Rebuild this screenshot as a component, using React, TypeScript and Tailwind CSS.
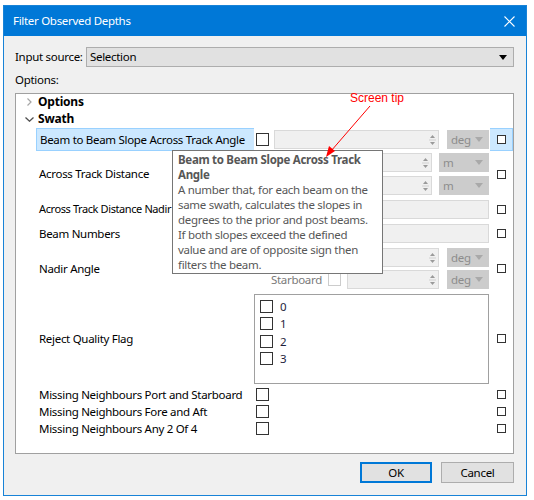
import React from "react";

const FONT = "font-['Noto_Sans','Open_Sans',sans-serif]";

function SmallBox() {
  return <div className="w-[9px] h-[9px] border border-[#333333] bg-white" />;
}

function Check({ disabled }: { disabled?: boolean }) {
  return (
    <div
      className={`w-[13px] h-[13px] border bg-white shrink-0 ${
        disabled ? "border-[#cccccc]" : "border-[#333333]"
      }`}
    />
  );
}

function SpinArrows() {
  return (
    <svg width="7" height="14" viewBox="0 0 7 14" className="shrink-0">
      <path d="M3.5 2 L6 5 L1 5 Z" fill="#9a9a9a" />
      <line x1="0" y1="7" x2="7" y2="7" stroke="#d0d0d0" strokeWidth="1" />
      <path d="M1 9 L6 9 L3.5 12 Z" fill="#9a9a9a" />
    </svg>
  );
}

function SpinField({ className }: { className: string }) {
  return (
    <div
      className={`h-[19px] border border-[#d9d9d9] bg-[#f0f0f0] flex items-center justify-end pr-[2px] ${className}`}
    >
      <SpinArrows />
    </div>
  );
}

function TextField({ className }: { className: string }) {
  return <div className={`h-[19px] border border-[#d9d9d9] bg-[#f0f0f0] ${className}`} />;
}

function Unit({ label, className }: { label: string; className: string }) {
  return (
    <div
      className={`h-[19px] bg-[#cccccc] flex items-center justify-between pl-[4px] pr-[6px] text-[#8c8c8c] ${className}`}
    >
      <span>{label}</span>
      <svg width="8" height="5" viewBox="0 0 8 5">
        <path d="M0 0 L8 0 L4 5 Z" fill="#a9a9a9" />
      </svg>
    </div>
  );
}

function Row({
  label,
  height,
  children,
  highlight,
  labelClass,
}: {
  label: string;
  height: string;
  children?: React.ReactNode;
  highlight?: boolean;
  labelClass?: string;
}) {
  return (
    <div className={`flex ${height}`}>
      <div className="w-[20px] shrink-0" />
      <div
        className={`w-[218px] shrink-0 flex items-center pl-[3px] whitespace-nowrap overflow-hidden ${
          highlight ? "bg-[#cce8ff] border border-r-0 border-[#99d1ff]" : ""
        } ${labelClass ?? ""}`}
      >
        {label}
      </div>
      <div className="w-[236px] shrink-0 flex flex-col justify-center">{children}</div>
      <div
        className={`flex-1 flex items-center justify-center ${
          highlight ? "bg-[#cce8ff] border border-l-0 border-[#99d1ff]" : ""
        }`}
      >
        <SmallBox />
      </div>
    </div>
  );
}

export default function App() {
  return (
    <div
      className={`relative w-[534px] h-[500px] bg-white text-[#000000] text-[11.5px] tracking-[-0.3px] ${FONT}`}
    >
      {/* Window */}
      <div className="absolute left-[3px] top-[5px] w-[524px] h-[491px] border border-[#1883d7] bg-[#f0f0f0] flex flex-col">
        {/* Title bar */}
        <div className="h-[30px] bg-[#0078d7] flex items-center justify-between pl-[9px] pr-[11px] shrink-0">
          <span className="text-white text-[11.5px]">Filter Observed Depths</span>
          <svg width="11" height="11" viewBox="0 0 11 11">
            <path d="M0.5 0.5 L10.5 10.5 M10.5 0.5 L0.5 10.5" stroke="#ffffff" strokeWidth="1.1" />
          </svg>
        </div>

        {/* Body */}
        <div className="flex flex-col pl-[11px] pr-[12px]">
          <div className="flex items-center mt-[11px] h-[20px]">
            <span className="w-[71px] whitespace-nowrap">Input source:</span>
            <div className="flex-1 h-[20px] bg-[#e1e1e1] border border-[#adadad] flex items-center justify-between pl-[3px] pr-[6px]">
              <span>Selection</span>
              <svg width="8" height="5" viewBox="0 0 8 5">
                <path d="M0 0 L8 0 L4 5 Z" fill="#000000" />
              </svg>
            </div>
          </div>

          <div className="mt-[5px] h-[16px] flex items-center">Options:</div>

          {/* Tree */}
          <div className="mt-[5px] h-[361px] bg-white border border-[#a0a0a0] flex flex-col">
            <div className="h-[16px] flex items-center">
              <div className="w-[22px] flex justify-end pr-[6px]">
                <svg width="5" height="8" viewBox="0 0 5 8">
                  <path d="M0.5 0.5 L4 4 L0.5 7.5" stroke="#a6a6a6" fill="none" strokeWidth="1.2" />
                </svg>
              </div>
              <span className="font-bold text-[12px] tracking-[-0.2px]">Options</span>
            </div>
            <div className="h-[18px] flex items-center">
              <div className="w-[22px] flex justify-end pr-[4px]">
                <svg width="9" height="5" viewBox="0 0 9 5">
                  <path d="M0.5 0.5 L4.5 4.2 L8.5 0.5" stroke="#505050" fill="none" strokeWidth="1.3" />
                </svg>
              </div>
              <span className="font-bold text-[12px] tracking-[-0.2px]">Swath</span>
            </div>

            <Row label="Beam to Beam Slope Across Track Angle" height="h-[23px]" highlight>
              <div className="flex items-center pl-[2px]">
                <Check />
                <SpinField className="w-[165px] ml-[5px]" />
                <Unit label="deg" className="w-[42px] ml-[8px]" />
              </div>
            </Row>

            <Row label="Across Track Distance" height="h-[46px]">
              <div className="flex flex-col gap-[4px]">
                <div className="flex items-center pl-[76px]">
                  <SpinField className="w-[102px]" />
                  <Unit label="m" className="w-[50px] ml-[7px]" />
                </div>
                <div className="flex items-center pl-[76px]">
                  <SpinField className="w-[102px]" />
                  <Unit label="m" className="w-[50px] ml-[7px]" />
                </div>
              </div>
            </Row>

            <Row
              label="Across Track Distance Nadir"
              height="h-[24px]"
              labelClass="text-[11px] tracking-[-0.4px]"
            >
              <div className="flex items-center pl-[46px]">
                <TextField className="w-[189px]" />
              </div>
            </Row>

            <Row label="Beam Numbers" height="h-[25px]">
              <div className="flex items-center pl-[46px]">
                <TextField className="w-[189px]" />
              </div>
            </Row>

            <Row label="Nadir Angle" height="h-[45px]">
              <div className="flex flex-col gap-[3px]">
                <div className="flex items-center justify-end pr-[1px]">
                  <Check disabled />
                  <SpinField className="w-[92px] ml-[6px]" />
                  <Unit label="deg" className="w-[42px] ml-[8px]" />
                </div>
                <div className="flex items-center justify-end pr-[1px]">
                  <span className="text-[#7a7a7a] mr-[6px]">Starboard</span>
                  <Check disabled />
                  <SpinField className="w-[92px] ml-[6px]" />
                  <Unit label="deg" className="w-[42px] ml-[8px]" />
                </div>
              </div>
            </Row>

            <Row label="Reject Quality Flag" height="h-[95px]">
              <div className="h-[90px] w-[235px] border border-[#a0a0a0] bg-white flex flex-col pt-[3px] pl-[5px]">
                {["0", "1", "2", "3"].map((n) => (
                  <div key={n} className="h-[17.5px] flex items-center gap-[7px]">
                    <Check />
                    <span className="text-[#1e1e3c]">{n}</span>
                  </div>
                ))}
              </div>
            </Row>

            {[
              "Missing Neighbours Port and Starboard",
              "Missing Neighbours Fore and Aft",
              "Missing Neighbours Any 2 Of 4",
            ].map((l) => (
              <Row key={l} label={l} height="h-[17px]">
                <div className="flex items-center pl-[2px]">
                  <Check />
                </div>
              </Row>
            ))}
          </div>

          {/* Buttons */}
          <div className="mt-[8px] flex justify-end gap-[9px]">
            <button className="w-[72px] h-[21px] bg-[#e1e1e1] border-2 border-[#0078d7]">
              OK
            </button>
            <button className="w-[73px] h-[21px] bg-[#e1e1e1] border border-[#adadad]">
              Cancel
            </button>
          </div>
        </div>
      </div>

      {/* Screen tip (tooltip) */}
      <div className="absolute left-[172px] top-[150px] w-[211px] h-[124px] bg-white border border-[#767676] pl-[5px] pt-[1px] leading-[15px] text-[#575757] whitespace-nowrap">
        <div className="font-bold">
          Beam to Beam Slope Across Track
          <br />
          Angle
        </div>
        <div>
          A number that, for each beam on the
          <br />
          same swath, calculates the slopes in
          <br />
          degrees to the prior and post beams.
          <br />
          If both slopes exceed the defined
          <br />
          value and are of opposite sign then
          <br />
          filters the beam.
        </div>
      </div>

      {/* Annotation */}
      <div className="absolute left-[350px] top-[89px] text-[12px] tracking-normal text-[#ff0000] font-['Liberation_Sans',sans-serif]">
        Screen tip
      </div>
      <svg className="absolute left-0 top-0 pointer-events-none" width="534" height="500">
        <line x1="370" y1="106" x2="331" y2="151" stroke="#ff0000" strokeWidth="1" />
        <path d="M326 157 L329 146 L335 151 Z" fill="#ff0000" />
      </svg>
    </div>
  );
}
